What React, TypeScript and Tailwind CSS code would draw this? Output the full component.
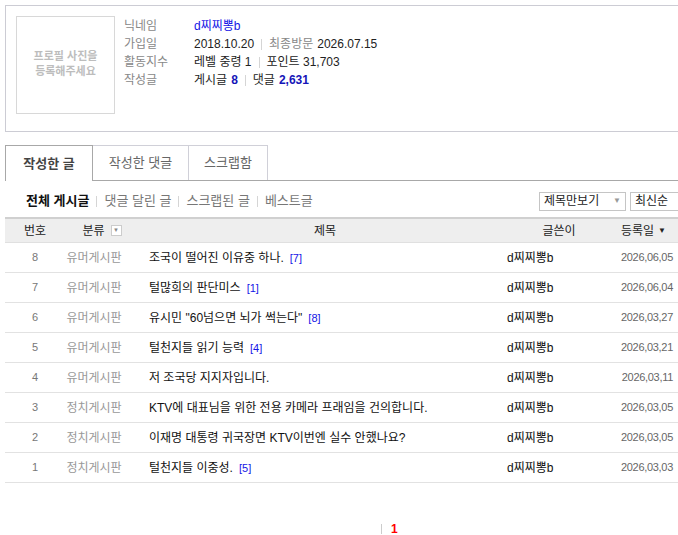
import React from "react";

const posts = [
  { no: 8, cat: "유머게시판", title: "조국이 떨어진 이유중 하나.", cmt: 7, date: "2026,06,05" },
  { no: 7, cat: "유머게시판", title: "털많희의 판단미스", cmt: 1, date: "2026,06,04" },
  { no: 6, cat: "유머게시판", title: "유시민 \"60넘으면 뇌가 썩는다\"", cmt: 8, date: "2026,03,27" },
  { no: 5, cat: "유머게시판", title: "털천지들 읽기 능력", cmt: 4, date: "2026,03,21" },
  { no: 4, cat: "유머게시판", title: "저 조국당 지지자입니다.", cmt: 0, date: "2026,03,11" },
  { no: 3, cat: "정치게시판", title: "KTV에 대표님을 위한 전용 카메라 프래임을 건의합니다.", cmt: 0, date: "2026,03,05" },
  { no: 2, cat: "정치게시판", title: "이재명 대통령 귀국장면 KTV이번엔 실수 안했나요?", cmt: 0, date: "2026,03,05" },
  { no: 1, cat: "정치게시판", title: "털천지들 이중성.", cmt: 5, date: "2026,03,03" },
];

function Sep() {
  return <span className="mx-[7px] inline-block h-[11px] w-px bg-[#d5d5d5]" />;
}

export default function App() {
  return (
    <div className="w-[678px] h-[535px] overflow-hidden bg-white font-['Liberation_Sans','Noto_Sans_CJK_KR',sans-serif] text-[12px] text-[#222]">
      <div className="w-[700px] pl-[5px] pt-[5px]">
        {/* profile */}
        <div className="flex gap-[9px] border border-[#ccccd4] p-[10px] h-[127px]">
          <div className="flex h-[98px] w-[99px] shrink-0 items-center justify-center border border-[#d8d8d8] pb-[2px] text-center text-[11px] font-bold leading-[15px] text-[#bdbdbd]">
            프로필 사진을
            <br />
            등록해주세요
          </div>
          <div className="pt-[1px] leading-[18px]">
            <div className="flex">
              <span className="w-[70px] text-[#888]">닉네임</span>
              <span className="text-[#1515e6]">d찌찌뽕b</span>
            </div>
            <div className="flex items-center">
              <span className="w-[70px] text-[#888]">가입일</span>
              <span>2018.10.20</span>
              <Sep />
              <span className="text-[#888]">최종방문</span>
              <span className="ml-[4px]">2026.07.15</span>
            </div>
            <div className="flex items-center">
              <span className="w-[70px] text-[#888]">활동지수</span>
              <span>레벨 중령 1</span>
              <Sep />
              <span>포인트 31,703</span>
            </div>
            <div className="flex items-center">
              <span className="w-[70px] text-[#888]">작성글</span>
              <span>게시글</span>
              <b className="ml-[4px] text-[#1515b8]">8</b>
              <Sep />
              <span>댓글</span>
              <b className="ml-[4px] text-[#1515b8]">2,631</b>
            </div>
          </div>
        </div>

        {/* tabs */}
        <div className="mt-[13px] flex h-[36px] border-b border-[#a8a8a8]">
          <div className="-mb-px flex w-[88px] items-center justify-center border border-b-0 border-[#a8a8a8] bg-white text-[13px] font-bold text-[#444]">
            작성한 글
          </div>
          <div className="flex w-[96px] items-center justify-center border-t border-r border-[#d0d0d8] text-[13px] text-[#666]">
            작성한 댓글
          </div>
          <div className="flex w-[79px] items-center justify-center border-t border-r border-[#d0d0d8] text-[13px] text-[#666]">
            스크랩함
          </div>
        </div>

        {/* filter row */}
        <div className="flex h-[36px] items-center pt-[4px]">
          <div className="flex items-center pl-[21px] text-[13px] text-[#777]">
            <b className="text-[#111]">전체 게시글</b>
            <Sep />
            <span>댓글 달린 글</span>
            <Sep />
            <span>스크랩된 글</span>
            <Sep />
            <span>베스트글</span>
          </div>
          <div className="ml-auto flex gap-[4px] pl-[20px]">
            <div className="flex h-[19px] w-[87px] items-center justify-between border border-[#c5c5c5] px-[4px] text-[12px] text-[#222]">
              <span>제목만보기</span>
              <span className="text-[8px] text-[#999]">▼</span>
            </div>
            <div className="flex h-[19px] w-[70px] items-center border border-[#c5c5c5] px-[4px] text-[12px] text-[#222]">
              최신순
            </div>
          </div>
        </div>

        {/* table */}
        <div className="w-[673px]">
          <div className="flex h-[26px] items-center border-t-2 border-b border-t-[#d0d0d0] border-b-[#e0e0e0] bg-[#eeeeee] text-[12px] text-[#222]">
            <div className="w-[60px] text-center">번호</div>
            <div className="flex w-[80px] items-center justify-center gap-[6px] pr-[6px]">
              <span>분류</span>
              <span className="flex h-[11px] w-[11px] items-center justify-center border border-[#ccc] bg-white text-[6px] text-[#888]">▼</span>
            </div>
            <div className="w-[360px] text-center">제목</div>
            <div className="w-[100px] pl-[8px] text-center">글쓴이</div>
            <div className="flex w-[73px] items-center justify-end gap-[4px] pr-[12px]">
              <span>등록일</span>
              <span className="text-[8px]">▼</span>
            </div>
          </div>
          {posts.map((p) => (
            <div key={p.no} className="flex h-[30px] items-center border-b border-[#e2e2e2]">
              <div className="w-[60px] text-center text-[11px] text-[#777]">{p.no}</div>
              <div className="w-[80px] pr-[22px] text-center text-[#999]">{p.cat}</div>
              <div className="w-[360px] whitespace-nowrap pl-[4px] text-[#111]">
                {p.title}
                {p.cmt > 0 && <span className="ml-[6px] text-[11px] text-[#1515e6]">[{p.cmt}]</span>}
              </div>
              <div className="w-[100px] pl-[2px] text-[#111]">d찌찌뽕b</div>
              <div className="w-[73px] pr-[5px] text-right text-[11px] text-[#666] tracking-[-0.3px]">{p.date}</div>
            </div>
          ))}
        </div>

        {/* pagination */}
        <div className="mt-[37px] flex items-center pl-[376px]">
          <span className="inline-block h-[10px] w-px bg-[#ccc]" />
          <b className="ml-[9px] text-[12px] text-[#ff0000]">1</b>
        </div>
      </div>
    </div>
  );
}
